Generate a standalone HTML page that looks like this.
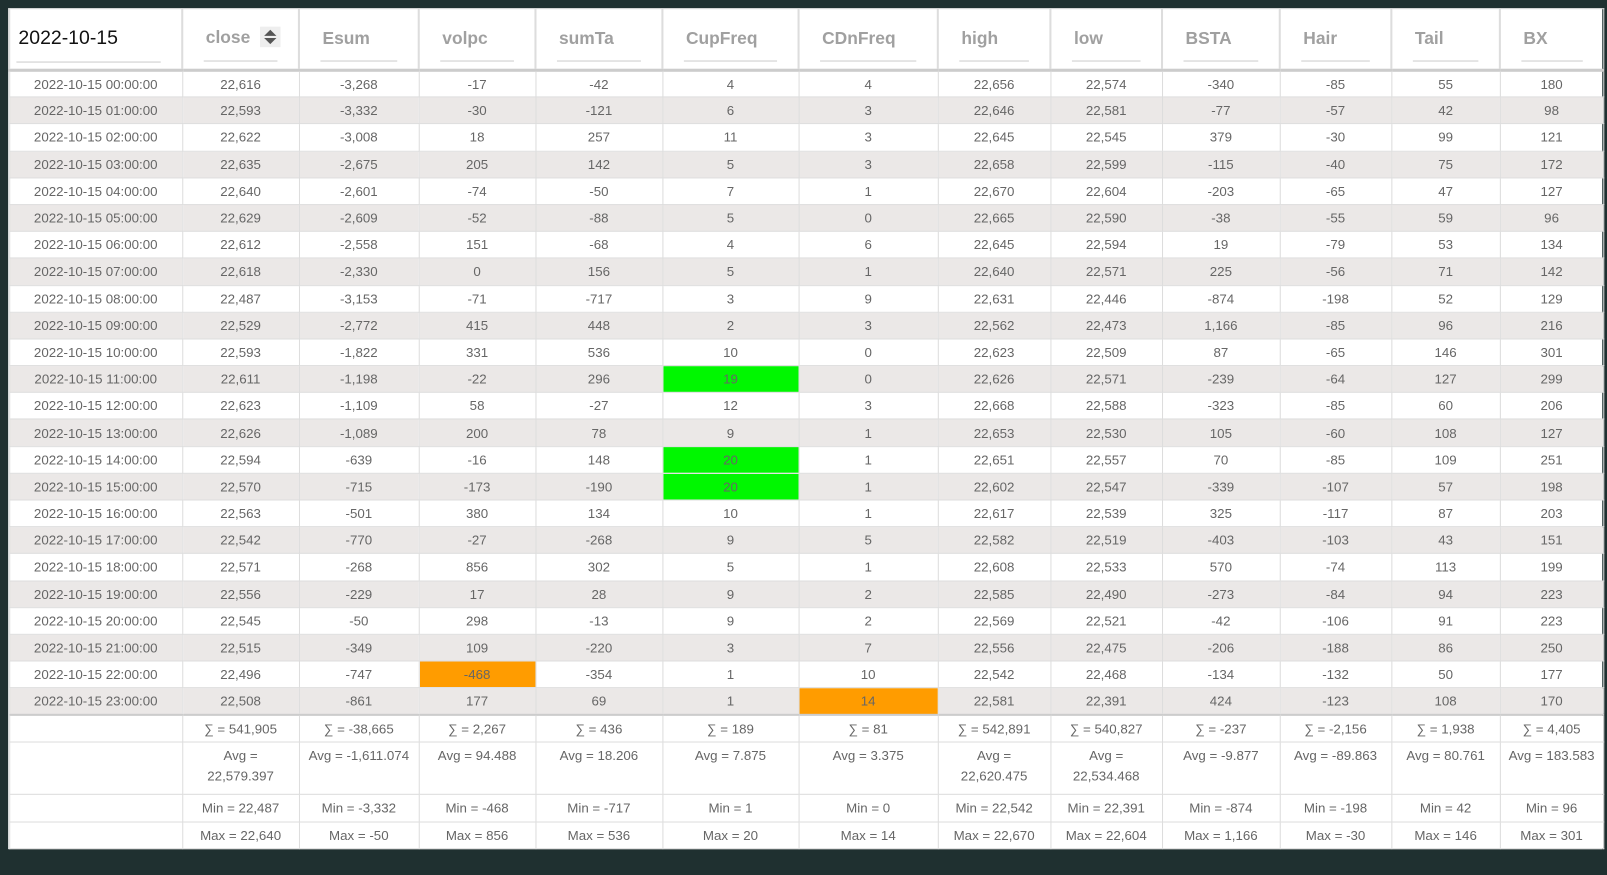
<!DOCTYPE html>
<html><head><meta charset="utf-8"><style>
html,body{margin:0;padding:0;background:#1f3030;width:1607px;height:853px;overflow:hidden}
.root{position:absolute;left:0;top:0;width:1607px;height:853px;transform:scale(1.0238,1.0256);transform-origin:0 0}
.wrap{position:absolute;left:8px;top:8px;width:1557px;height:820px;background:#fff}
table{border-collapse:collapse;table-layout:fixed;width:1557px;font-family:"Liberation Sans",sans-serif;font-size:13px;color:#666;position:absolute;left:8px;top:8px}
td{border:1px solid #ddd;text-align:center;padding:0;overflow:hidden;white-space:nowrap}
tbody tr{height:26.2px}
tbody tr:nth-child(even) td{background:#ebe8e7}
thead tr{height:60px}
thead td{border-bottom:3px solid #ccc;border-left:2px solid #ddd;text-align:left;font-size:17px;color:#a0a0a0;font-weight:bold;position:relative}
thead td span{display:block;margin:0 20px 0 20px;padding:11px 0 11px 2px;border-bottom:1px solid #ccc}
thead td.f{color:#111;font-size:19px;font-weight:normal}
thead td.f span{margin-left:6px}
.sort{display:inline-block;width:20px;height:20px;background:#eee;vertical-align:middle;margin-left:10px;position:relative;top:-2px}
.sort:before{content:"";position:absolute;left:4px;top:3px;border:6px solid transparent;border-bottom:6px solid #555;border-top:0}
.sort:after{content:"";position:absolute;left:4px;top:11px;border:6px solid transparent;border-top:6px solid #555;border-bottom:0}
tfoot td{background:#fff}
tfoot tr{height:26.5px}
tfoot tr.s td{border-top:2px solid #ccc}
tfoot tr.a{height:51px}
tfoot tr.a td{vertical-align:top;padding-top:3px;white-space:normal;line-height:20px}
.g{background:#00f700!important}
.o{background:#ff9c00!important}
</style></head><body>
<div class="root">
<div class="wrap"></div>
<table>
<colgroup><col style="width:169px"><col style="width:114px"><col style="width:117px"><col style="width:114px"><col style="width:124px"><col style="width:133px"><col style="width:136px"><col style="width:110px"><col style="width:109px"><col style="width:115px"><col style="width:109px"><col style="width:106px"><col style="width:101px"></colgroup>
<thead><tr><td class="f"><span>2022-10-15</span></td><td><span>close<i class="sort"></i></span></td><td><span>Esum</span></td><td><span>volpc</span></td><td><span>sumTa</span></td><td><span>CupFreq</span></td><td><span>CDnFreq</span></td><td><span>high</span></td><td><span>low</span></td><td><span>BSTA</span></td><td><span>Hair</span></td><td><span>Tail</span></td><td><span>BX</span></td></tr></thead>
<tbody>
<tr><td>2022-10-15 00:00:00</td><td>22,616</td><td>-3,268</td><td>-17</td><td>-42</td><td>4</td><td>4</td><td>22,656</td><td>22,574</td><td>-340</td><td>-85</td><td>55</td><td>180</td></tr>
<tr><td>2022-10-15 01:00:00</td><td>22,593</td><td>-3,332</td><td>-30</td><td>-121</td><td>6</td><td>3</td><td>22,646</td><td>22,581</td><td>-77</td><td>-57</td><td>42</td><td>98</td></tr>
<tr><td>2022-10-15 02:00:00</td><td>22,622</td><td>-3,008</td><td>18</td><td>257</td><td>11</td><td>3</td><td>22,645</td><td>22,545</td><td>379</td><td>-30</td><td>99</td><td>121</td></tr>
<tr><td>2022-10-15 03:00:00</td><td>22,635</td><td>-2,675</td><td>205</td><td>142</td><td>5</td><td>3</td><td>22,658</td><td>22,599</td><td>-115</td><td>-40</td><td>75</td><td>172</td></tr>
<tr><td>2022-10-15 04:00:00</td><td>22,640</td><td>-2,601</td><td>-74</td><td>-50</td><td>7</td><td>1</td><td>22,670</td><td>22,604</td><td>-203</td><td>-65</td><td>47</td><td>127</td></tr>
<tr><td>2022-10-15 05:00:00</td><td>22,629</td><td>-2,609</td><td>-52</td><td>-88</td><td>5</td><td>0</td><td>22,665</td><td>22,590</td><td>-38</td><td>-55</td><td>59</td><td>96</td></tr>
<tr><td>2022-10-15 06:00:00</td><td>22,612</td><td>-2,558</td><td>151</td><td>-68</td><td>4</td><td>6</td><td>22,645</td><td>22,594</td><td>19</td><td>-79</td><td>53</td><td>134</td></tr>
<tr><td>2022-10-15 07:00:00</td><td>22,618</td><td>-2,330</td><td>0</td><td>156</td><td>5</td><td>1</td><td>22,640</td><td>22,571</td><td>225</td><td>-56</td><td>71</td><td>142</td></tr>
<tr><td>2022-10-15 08:00:00</td><td>22,487</td><td>-3,153</td><td>-71</td><td>-717</td><td>3</td><td>9</td><td>22,631</td><td>22,446</td><td>-874</td><td>-198</td><td>52</td><td>129</td></tr>
<tr><td>2022-10-15 09:00:00</td><td>22,529</td><td>-2,772</td><td>415</td><td>448</td><td>2</td><td>3</td><td>22,562</td><td>22,473</td><td>1,166</td><td>-85</td><td>96</td><td>216</td></tr>
<tr><td>2022-10-15 10:00:00</td><td>22,593</td><td>-1,822</td><td>331</td><td>536</td><td>10</td><td>0</td><td>22,623</td><td>22,509</td><td>87</td><td>-65</td><td>146</td><td>301</td></tr>
<tr><td>2022-10-15 11:00:00</td><td>22,611</td><td>-1,198</td><td>-22</td><td>296</td><td class="g">19</td><td>0</td><td>22,626</td><td>22,571</td><td>-239</td><td>-64</td><td>127</td><td>299</td></tr>
<tr><td>2022-10-15 12:00:00</td><td>22,623</td><td>-1,109</td><td>58</td><td>-27</td><td>12</td><td>3</td><td>22,668</td><td>22,588</td><td>-323</td><td>-85</td><td>60</td><td>206</td></tr>
<tr><td>2022-10-15 13:00:00</td><td>22,626</td><td>-1,089</td><td>200</td><td>78</td><td>9</td><td>1</td><td>22,653</td><td>22,530</td><td>105</td><td>-60</td><td>108</td><td>127</td></tr>
<tr><td>2022-10-15 14:00:00</td><td>22,594</td><td>-639</td><td>-16</td><td>148</td><td class="g">20</td><td>1</td><td>22,651</td><td>22,557</td><td>70</td><td>-85</td><td>109</td><td>251</td></tr>
<tr><td>2022-10-15 15:00:00</td><td>22,570</td><td>-715</td><td>-173</td><td>-190</td><td class="g">20</td><td>1</td><td>22,602</td><td>22,547</td><td>-339</td><td>-107</td><td>57</td><td>198</td></tr>
<tr><td>2022-10-15 16:00:00</td><td>22,563</td><td>-501</td><td>380</td><td>134</td><td>10</td><td>1</td><td>22,617</td><td>22,539</td><td>325</td><td>-117</td><td>87</td><td>203</td></tr>
<tr><td>2022-10-15 17:00:00</td><td>22,542</td><td>-770</td><td>-27</td><td>-268</td><td>9</td><td>5</td><td>22,582</td><td>22,519</td><td>-403</td><td>-103</td><td>43</td><td>151</td></tr>
<tr><td>2022-10-15 18:00:00</td><td>22,571</td><td>-268</td><td>856</td><td>302</td><td>5</td><td>1</td><td>22,608</td><td>22,533</td><td>570</td><td>-74</td><td>113</td><td>199</td></tr>
<tr><td>2022-10-15 19:00:00</td><td>22,556</td><td>-229</td><td>17</td><td>28</td><td>9</td><td>2</td><td>22,585</td><td>22,490</td><td>-273</td><td>-84</td><td>94</td><td>223</td></tr>
<tr><td>2022-10-15 20:00:00</td><td>22,545</td><td>-50</td><td>298</td><td>-13</td><td>9</td><td>2</td><td>22,569</td><td>22,521</td><td>-42</td><td>-106</td><td>91</td><td>223</td></tr>
<tr><td>2022-10-15 21:00:00</td><td>22,515</td><td>-349</td><td>109</td><td>-220</td><td>3</td><td>7</td><td>22,556</td><td>22,475</td><td>-206</td><td>-188</td><td>86</td><td>250</td></tr>
<tr><td>2022-10-15 22:00:00</td><td>22,496</td><td>-747</td><td class="o">-468</td><td>-354</td><td>1</td><td>10</td><td>22,542</td><td>22,468</td><td>-134</td><td>-132</td><td>50</td><td>177</td></tr>
<tr><td>2022-10-15 23:00:00</td><td>22,508</td><td>-861</td><td>177</td><td>69</td><td>1</td><td class="o">14</td><td>22,581</td><td>22,391</td><td>424</td><td>-123</td><td>108</td><td>170</td></tr>
</tbody>
<tfoot>
<tr class="s"><td></td><td>∑ = 541,905</td><td>∑ = -38,665</td><td>∑ = 2,267</td><td>∑ = 436</td><td>∑ = 189</td><td>∑ = 81</td><td>∑ = 542,891</td><td>∑ = 540,827</td><td>∑ = -237</td><td>∑ = -2,156</td><td>∑ = 1,938</td><td>∑ = 4,405</td></tr>
<tr class="a"><td></td><td>Avg =<br>22,579.397</td><td>Avg = -1,611.074</td><td>Avg = 94.488</td><td>Avg = 18.206</td><td>Avg = 7.875</td><td>Avg = 3.375</td><td>Avg =<br>22,620.475</td><td>Avg =<br>22,534.468</td><td>Avg = -9.877</td><td>Avg = -89.863</td><td>Avg = 80.761</td><td>Avg = 183.583</td></tr>
<tr><td></td><td>Min = 22,487</td><td>Min = -3,332</td><td>Min = -468</td><td>Min = -717</td><td>Min = 1</td><td>Min = 0</td><td>Min = 22,542</td><td>Min = 22,391</td><td>Min = -874</td><td>Min = -198</td><td>Min = 42</td><td>Min = 96</td></tr>
<tr><td></td><td>Max = 22,640</td><td>Max = -50</td><td>Max = 856</td><td>Max = 536</td><td>Max = 20</td><td>Max = 14</td><td>Max = 22,670</td><td>Max = 22,604</td><td>Max = 1,166</td><td>Max = -30</td><td>Max = 146</td><td>Max = 301</td></tr>
</tfoot>
</table>
</div>
</body></html>
